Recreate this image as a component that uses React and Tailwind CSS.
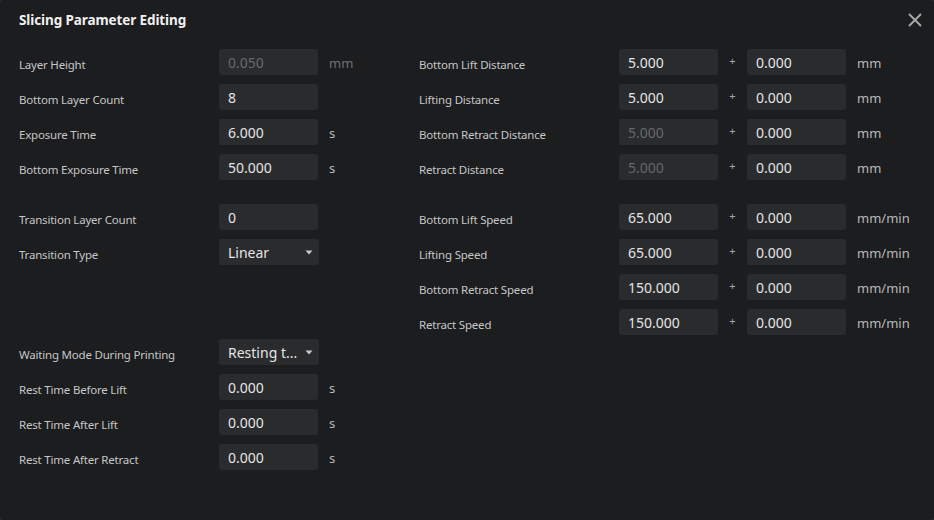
import React from "react";

const font = { fontFamily: '"Noto Sans", "Open Sans", sans-serif' };

function Input({ value, disabled }) {
  return (
    <div
      className={`w-[99px] h-[26px] rounded-[3px] bg-[#2a2b2d] flex items-center pl-[9px] text-[14px] ${
        disabled ? "text-[#67686a]" : "text-[#e4e4e4]"
      }`}
    >
      {value}
    </div>
  );
}

function Select({ value }) {
  return (
    <div className="w-[100px] h-[26px] rounded-[3px] bg-[#2a2b2d] flex items-center justify-between pl-[9px] pr-[6px] text-[14px] text-[#e4e4e4]">
      <span>{value}</span>
      <svg width="8" height="5" viewBox="0 0 8 5" className="mt-[1px]">
        <path d="M0.5 0.5 H7.5 L4 4.5 Z" fill="#c8c8c8" />
      </svg>
    </div>
  );
}

function Label({ children }) {
  return (
    <div className="w-[200px] text-[11.5px] tracking-[-0.2px] text-[#c6c6c6] pt-[6px]">
      {children}
    </div>
  );
}

function LeftRow({ label, value, unit, disabled, select, className = "" }) {
  return (
    <div className={`flex items-center h-[26px] ${className}`}>
      <Label>{label}</Label>
      {select ? <Select value={value} /> : <Input value={value} disabled={disabled} />}
      {unit && (
        <div
          className={`ml-[11px] text-[13px] pt-[3px] ${
            disabled ? "text-[#6e6f71]" : "text-[#b8b8b8]"
          }`}
        >
          {unit}
        </div>
      )}
    </div>
  );
}

function RightRow({ label, value, value2, unit, disabled, className = "" }) {
  return (
    <div className={`flex items-center h-[26px] ${className}`}>
      <Label>{label}</Label>
      <Input value={value} disabled={disabled} />
      <div className="w-[29px] flex justify-center text-[11px] text-[#a8a8a8] pb-[2px]">+</div>
      <Input value={value2} />
      <div className="ml-[11px] text-[13px] pt-[3px] text-[#b8b8b8]">{unit}</div>
    </div>
  );
}

export default function App() {
  return (
    <div className="w-[934px] h-[520px] bg-[#2a2a2a]" style={font}>
      <div className="w-full h-full bg-[#1c1d1f] rounded-[4px] flex flex-col">
        <div className="h-[40px] flex items-center justify-between pl-[19px] pr-[12px]">
          <div className="text-[13.5px] tracking-[-0.1px] font-bold text-[#f0f0f0] pt-[1px]">
            Slicing Parameter Editing
          </div>
          <svg width="14" height="14" viewBox="0 0 14 14" className="mb-[1px]">
            <path d="M1 1 L13 13 M13 1 L1 13" stroke="#a6a6a6" strokeWidth="2" />
          </svg>
        </div>
        <div className="flex pt-[9px] pl-[19px]">
          <div className="w-[400px] flex flex-col gap-[9px]">
            <LeftRow label="Layer Height" value="0.050" unit="mm" disabled />
            <LeftRow label="Bottom Layer Count" value="8" />
            <LeftRow label="Exposure Time" value="6.000" unit="s" />
            <LeftRow label="Bottom Exposure Time" value="50.000" unit="s" />
            <LeftRow label="Transition Layer Count" value="0" className="mt-[15px]" />
            <LeftRow label="Transition Type" value="Linear" select />
            <LeftRow
              label="Waiting Mode During Printing"
              value="Resting t..."
              select
              className="mt-[65px]"
            />
            <LeftRow label="Rest Time Before Lift" value="0.000" unit="s" />
            <LeftRow label="Rest Time After Lift" value="0.000" unit="s" />
            <LeftRow label="Rest Time After Retract" value="0.000" unit="s" />
          </div>
          <div className="flex flex-col gap-[9px]">
            <RightRow label="Bottom Lift Distance" value="5.000" value2="0.000" unit="mm" />
            <RightRow label="Lifting Distance" value="5.000" value2="0.000" unit="mm" />
            <RightRow
              label="Bottom Retract Distance"
              value="5.000"
              value2="0.000"
              unit="mm"
              disabled
            />
            <RightRow label="Retract Distance" value="5.000" value2="0.000" unit="mm" disabled />
            <RightRow
              label="Bottom Lift Speed"
              value="65.000"
              value2="0.000"
              unit="mm/min"
              className="mt-[15px]"
            />
            <RightRow label="Lifting Speed" value="65.000" value2="0.000" unit="mm/min" />
            <RightRow label="Bottom Retract Speed" value="150.000" value2="0.000" unit="mm/min" />
            <RightRow label="Retract Speed" value="150.000" value2="0.000" unit="mm/min" />
          </div>
        </div>
      </div>
    </div>
  );
}
